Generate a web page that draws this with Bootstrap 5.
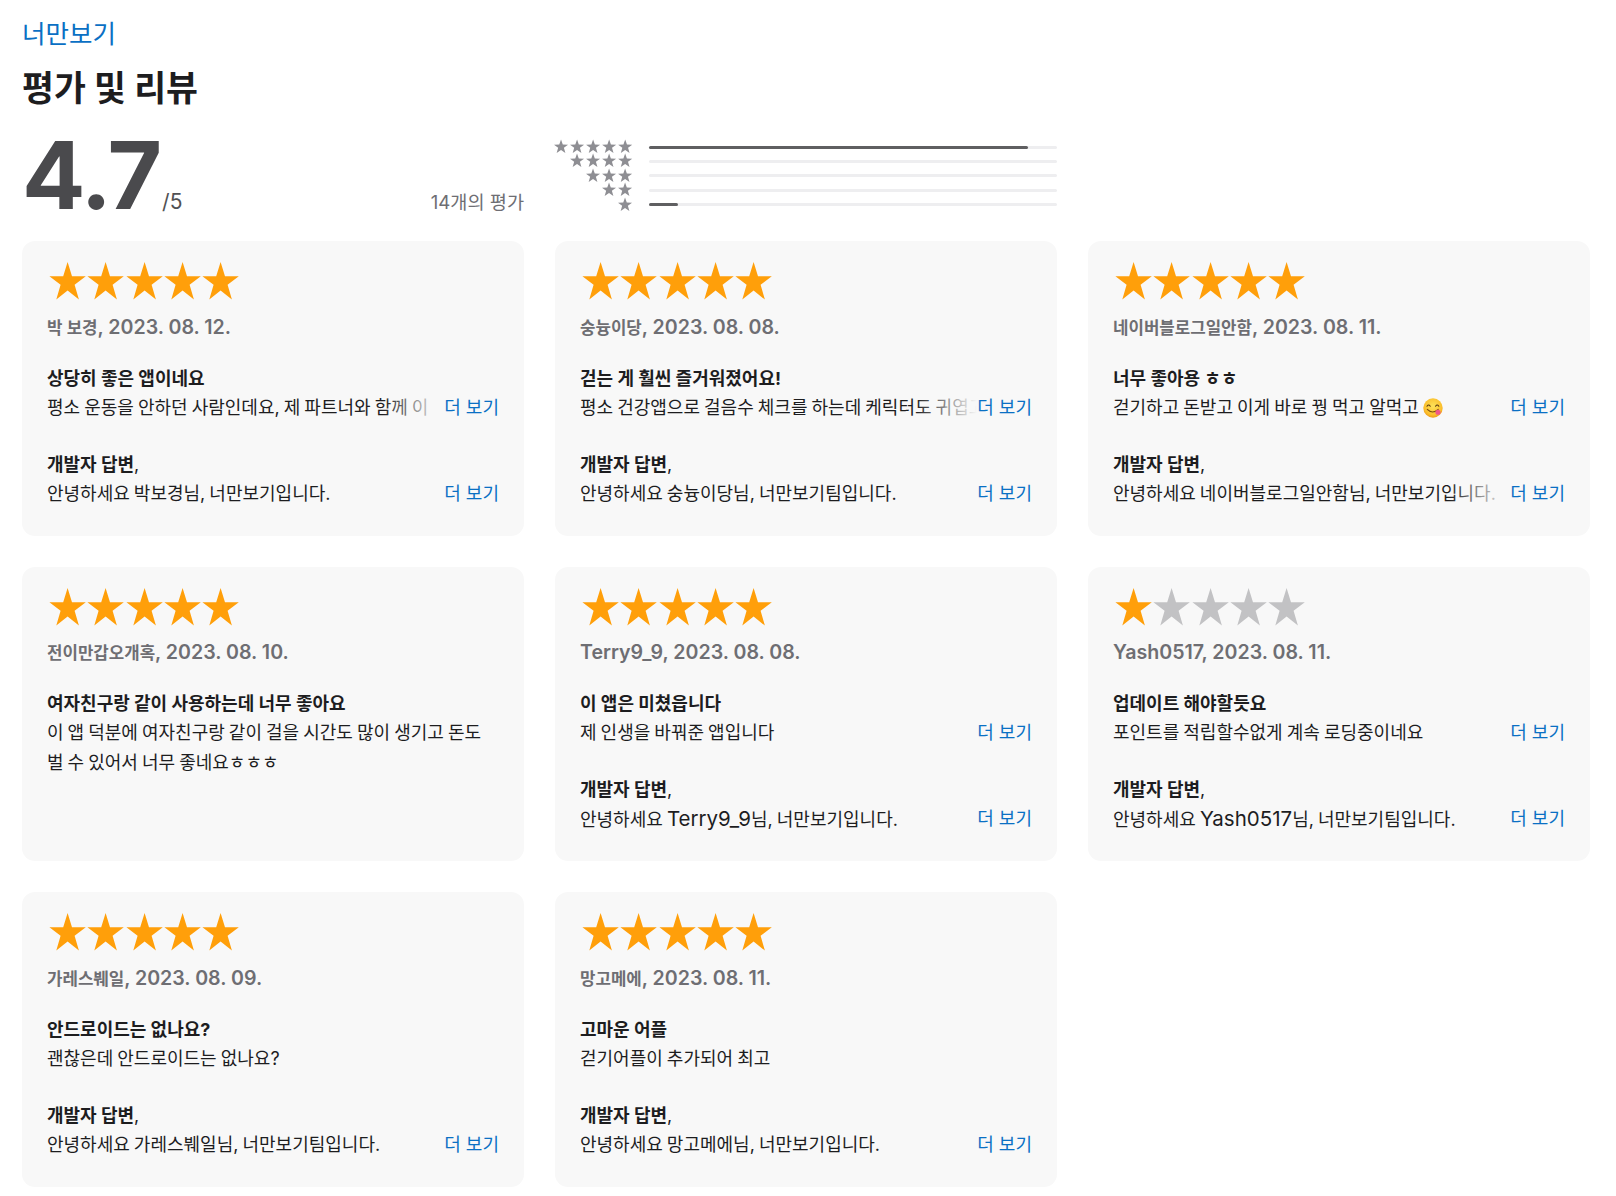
<!DOCTYPE html>
<html lang="ko">
<head>
<meta charset="utf-8">
<link href="https://cdn.jsdelivr.net/npm/bootstrap@5.3.0/dist/css/bootstrap.min.css" rel="stylesheet">
<style>
body{background:#fff;font-family:Inter,"Noto Sans CJK KR",sans-serif;color:#1d1d1f;font-size:18px;line-height:29px}
.page-wrap{padding:16px 26px 0 22px}
.app-link{display:block;color:#0a70c4;font-size:25.5px;line-height:36px;text-decoration:none}
.sec-title{font-size:34.7px;font-weight:700;line-height:38px;margin:17px 0 0;color:#1d1d1f}
.head-grid{display:grid;grid-template-columns:repeat(3,502px);column-gap:31px;margin-top:21px;height:113px}
.big-score{font-size:94px;font-weight:700;line-height:94px;color:#4a4a4d;letter-spacing:-2px}
.out-of{font-size:21px;color:#515154;line-height:24px;margin-left:2px}
.rate-count{font-size:18.6px;color:#6e6e73;line-height:24px}
.rows-box{padding-top:11px}
.bars-stars{width:78.5px;display:flex;flex-direction:column;align-items:flex-end;flex:none}
.bars-stars svg{display:block;height:14.4px;width:auto}
.bars-col{margin:1px 0 0 15.5px;flex:1}
.bar-row{height:14.4px;display:flex;align-items:center}
.bar-track{height:3px;width:100%;background:#eeeef0;border-radius:2px}
.bar-fill{height:3px;background:#5f5f61;border-radius:2px}
.rev-grid{display:grid;grid-template-columns:repeat(3,502px);column-gap:31px;row-gap:31px}
.rev-box{background:#f8f8f8;border-radius:13px;padding:20px 25px 0 25px;height:294.5px;overflow:hidden}
.rev-stars{display:flex;height:40px;margin-left:2px}
.rev-stars svg{width:38.3px;height:40px;display:block;flex:none}
.rev-meta{font-size:16.8px;font-weight:600;color:#6e6e73;margin-top:11.5px;line-height:28px}
.lat-meta{font-size:19.6px}
.lat-body{font-size:20.5px}
.rev-title{font-weight:700;margin-top:22px;line-height:29px}
.rev-line{display:flex;justify-content:space-between;height:29px;white-space:nowrap}
.rev-clip{overflow:hidden;flex:1;position:relative;word-spacing:-1px}
.rev-clip.faded::after{content:"";position:absolute;top:0;right:0;bottom:0;width:62px;background:linear-gradient(to right,rgba(248,248,248,0),#f8f8f8)}
.more-lnk{color:#0a70c4;text-decoration:none;flex:none}
.rep-head{margin-top:28px;font-weight:700;line-height:29px}
.rep-head span{font-weight:400}
.rev-wrap{white-space:normal;line-height:30px;word-spacing:-1px}
.emo{vertical-align:-4px}
</style>
</head>
<body>
<div class="page-wrap">
<a class="app-link" href="#">너만보기</a>
<h2 class="sec-title">평가 및 리뷰</h2>
<div class="head-grid">
 <div class="d-flex justify-content-between align-items-baseline">
  <div class="d-flex align-items-baseline"><span class="big-score">4.7</span><span class="out-of">/5</span></div>
  <div class="rate-count">14개의 평가</div>
 </div>
 <div class="d-flex align-items-start rows-box">
  <div class="bars-stars">
   <svg viewBox="0 0 80 14.35" fill="#8e8e93"><use href="#st5"/></svg>
   <svg viewBox="16 0 64 14.35" fill="#8e8e93"><use href="#st5"/></svg>
   <svg viewBox="32 0 48 14.35" fill="#8e8e93"><use href="#st5"/></svg>
   <svg viewBox="48 0 32 14.35" fill="#8e8e93"><use href="#st5"/></svg>
   <svg viewBox="64 0 16 14.35" fill="#8e8e93"><use href="#st5"/></svg>
  </div>
  <div class="bars-col">
   <div class="bar-row"><div class="bar-track"><div class="bar-fill" style="width:93%"></div></div></div>
   <div class="bar-row"><div class="bar-track"></div></div>
   <div class="bar-row"><div class="bar-track"></div></div>
   <div class="bar-row"><div class="bar-track"></div></div>
   <div class="bar-row"><div class="bar-track"><div class="bar-fill" style="width:7%"></div></div></div>
  </div>
 </div>
 <div></div>
</div>
<svg width="0" height="0" class="position-absolute"><defs>
 <path id="s1" d="M8 .6l1.75 4.9 5.25.15-4.15 3.2 1.5 5.05L8 10.95 3.65 13.9l1.5-5.05L1 5.65l5.25-.15z"/>
 <g id="st5"><use href="#s1"/><use href="#s1" x="16"/><use href="#s1" x="32"/><use href="#s1" x="48"/><use href="#s1" x="64"/></g>
 <radialGradient id="emoG" cx=".5" cy=".4" r=".6"><stop offset="0" stop-color="#fde25a"/><stop offset=".75" stop-color="#fbc02d"/><stop offset="1" stop-color="#ee9a1a"/></radialGradient>
</defs></svg>
<div class="rev-grid">
 <div class="rev-box">
  <div class="rev-stars" data-n="5"></div>
  <div class="rev-meta">박 보경<span class="lat-meta">, 2023. 08. 12.</span></div>
  <div class="rev-title">상당히 좋은 앱이네요</div>
  <div class="rev-line"><div class="rev-clip faded">평소 운동을 안하던 사람인데요, 제 파트너와 함께 이</div><a class="more-lnk" href="#">더 보기</a></div>
  <div class="rep-head">개발자 답변<span>,</span></div>
  <div class="rev-line"><div class="rev-clip">안녕하세요 박보경님, 너만보기입니다.</div><a class="more-lnk" href="#">더 보기</a></div>
 </div>
 <div class="rev-box">
  <div class="rev-stars" data-n="5"></div>
  <div class="rev-meta">숭늉이당<span class="lat-meta">, 2023. 08. 08.</span></div>
  <div class="rev-title">걷는 게 훨씬 즐거워졌어요!</div>
  <div class="rev-line"><div class="rev-clip faded">평소 건강앱으로 걸음수 체크를 하는데 케릭터도 귀엽고</div><a class="more-lnk" href="#">더 보기</a></div>
  <div class="rep-head">개발자 답변<span>,</span></div>
  <div class="rev-line"><div class="rev-clip">안녕하세요 숭늉이당님, 너만보기팀입니다.</div><a class="more-lnk" href="#">더 보기</a></div>
 </div>
 <div class="rev-box">
  <div class="rev-stars" data-n="5"></div>
  <div class="rev-meta">네이버블로그일안함<span class="lat-meta">, 2023. 08. 11.</span></div>
  <div class="rev-title">너무 좋아용 ㅎㅎ</div>
  <div class="rev-line"><div class="rev-clip">걷기하고 돈받고 이게 바로 꿩 먹고 알먹고 <svg width="20" height="20" viewBox="0 0 21 21" class="emo"><circle cx="10.5" cy="10.5" r="10.2" fill="url(#emoG)"/><path d="M4.2 8.6q1.7-2.6 3.4 0M13.2 8.6q1.7-2.6 3.4 0" stroke="#5a3a10" stroke-width="1.1" fill="none" stroke-linecap="round"/><path d="M4.5 12q5.5 5.5 11.5 0" stroke="#7a4a10" stroke-width="1.1" fill="none" stroke-linecap="round"/><circle cx="15.7" cy="15" r="2.7" fill="#f0568a"/></svg></div><a class="more-lnk" href="#">더 보기</a></div>
  <div class="rep-head">개발자 답변<span>,</span></div>
  <div class="rev-line"><div class="rev-clip faded">안녕하세요 네이버블로그일안함님, 너만보기입니다.</div><a class="more-lnk" href="#">더 보기</a></div>
 </div>
 <div class="rev-box">
  <div class="rev-stars" data-n="5"></div>
  <div class="rev-meta">전이만갑오개혹<span class="lat-meta">, 2023. 08. 10.</span></div>
  <div class="rev-title">여자친구랑 같이 사용하는데 너무 좋아요</div>
  <div class="rev-wrap">이 앱 덕분에 여자친구랑 같이 걸을 시간도 많이 생기고 돈도<br>벌 수 있어서 너무 좋네요ㅎㅎㅎ</div>
 </div>
 <div class="rev-box">
  <div class="rev-stars" data-n="5"></div>
  <div class="rev-meta"><span class="lat-meta">Terry9_9, 2023. 08. 08.</span></div>
  <div class="rev-title">이 앱은 미쳤읍니다</div>
  <div class="rev-line"><div class="rev-clip">제 인생을 바꿔준 앱입니다</div><a class="more-lnk" href="#">더 보기</a></div>
  <div class="rep-head">개발자 답변<span>,</span></div>
  <div class="rev-line"><div class="rev-clip">안녕하세요 <span class="lat-body">Terry9_9</span>님, 너만보기입니다.</div><a class="more-lnk" href="#">더 보기</a></div>
 </div>
 <div class="rev-box">
  <div class="rev-stars" data-n="1"></div>
  <div class="rev-meta"><span class="lat-meta">Yash0517, 2023. 08. 11.</span></div>
  <div class="rev-title">업데이트 해야할듯요</div>
  <div class="rev-line"><div class="rev-clip">포인트를 적립할수없게 계속 로딩중이네요</div><a class="more-lnk" href="#">더 보기</a></div>
  <div class="rep-head">개발자 답변<span>,</span></div>
  <div class="rev-line"><div class="rev-clip">안녕하세요 <span class="lat-body">Yash0517</span>님, 너만보기팀입니다.</div><a class="more-lnk" href="#">더 보기</a></div>
 </div>
 <div class="rev-box">
  <div class="rev-stars" data-n="5"></div>
  <div class="rev-meta">가레스붸일<span class="lat-meta">, 2023. 08. 09.</span></div>
  <div class="rev-title">안드로이드는 없나요?</div>
  <div class="rev-line"><div class="rev-clip">괜찮은데 안드로이드는 없나요?</div></div>
  <div class="rep-head">개발자 답변<span>,</span></div>
  <div class="rev-line"><div class="rev-clip">안녕하세요 가레스붸일님, 너만보기팀입니다.</div><a class="more-lnk" href="#">더 보기</a></div>
 </div>
 <div class="rev-box">
  <div class="rev-stars" data-n="5"></div>
  <div class="rev-meta">망고메에<span class="lat-meta">, 2023. 08. 11.</span></div>
  <div class="rev-title">고마운 어플</div>
  <div class="rev-line"><div class="rev-clip">걷기어플이 추가되어 최고</div></div>
  <div class="rep-head">개발자 답변<span>,</span></div>
  <div class="rev-line"><div class="rev-clip">안녕하세요 망고메에님, 너만보기입니다.</div><a class="more-lnk" href="#">더 보기</a></div>
 </div>
</div>
</div>
<script>
document.querySelectorAll('.rev-stars').forEach(function(b){
 var n=+b.dataset.n,h='';
 for(var i=0;i<5;i++){h+='<svg viewBox="0 0 38.3 40"><path fill="'+(i<n?'#ff9f0a':'#c2c2c4')+'" d="M18.6 1l4.4 14.2h13.8l-11.2 8.6 4.3 14.8-11.3-9-11.3 9 4.3-14.8L.4 15.2h13.8z"/></svg>';}
 b.innerHTML=h;
});
</script>
<script src="https://cdn.jsdelivr.net/npm/bootstrap@5.3.0/dist/js/bootstrap.bundle.min.js"></script>
</body>
</html>
